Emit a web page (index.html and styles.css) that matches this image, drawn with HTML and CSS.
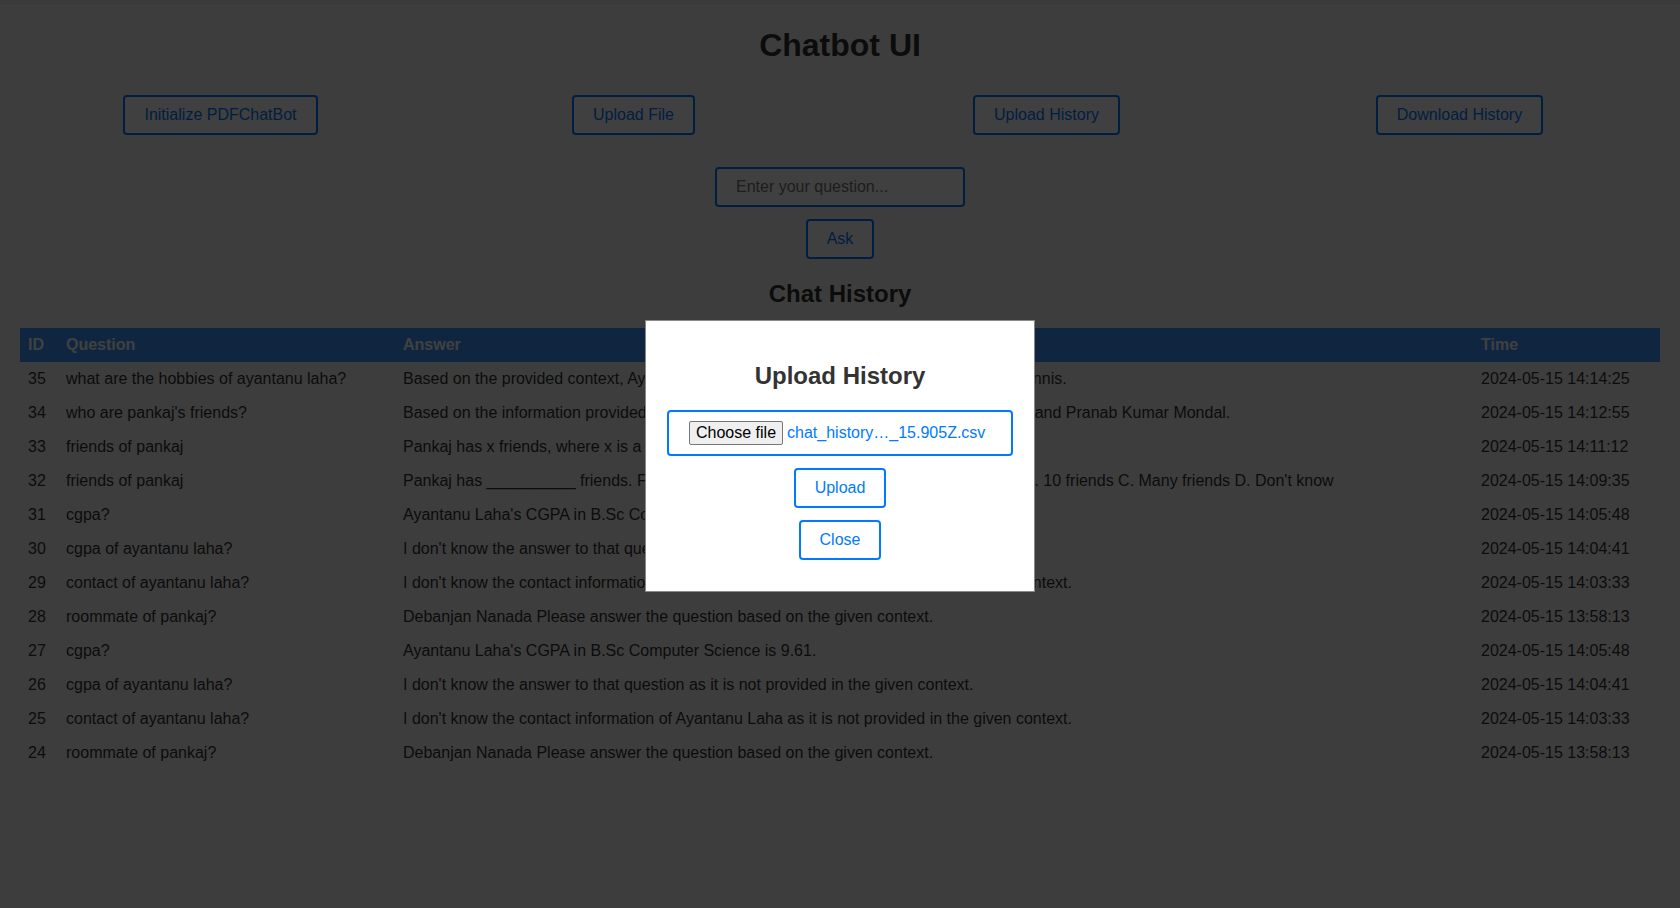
FILE: index.html
```html
<!DOCTYPE html>
<html lang="en">
<head>
<meta charset="utf-8">
<title>Chatbot UI</title>
<link rel="stylesheet" href="styles.css">
</head>
<body>
<div class="top-rule"></div>
<h1 class="title">Chatbot UI</h1>
<div class="actions">
  <div class="action-cell"><button class="btn">Initialize PDFChatBot</button></div>
  <div class="action-cell"><button class="btn">Upload File</button></div>
  <div class="action-cell"><button class="btn">Upload History</button></div>
  <div class="action-cell"><button class="btn">Download History</button></div>
</div>
<div class="ask-form">
  <input class="question-input" type="text" placeholder="Enter your question...">
  <button class="btn">Ask</button>
</div>
<h2 class="section-title">Chat History</h2>
<table class="history">
  <colgroup>
    <col class="col-id"><col class="col-q"><col class="col-a"><col class="col-t">
  </colgroup>
  <thead>
    <tr><th>ID</th><th>Question</th><th>Answer</th><th>Time</th></tr>
  </thead>
  <tbody>
    <tr><td>35</td><td>what are the hobbies of ayantanu laha?</td><td>Based on the provided context, Ayantanu Laha's hobbies are playing cricket, darts and tennis.</td><td>2024-05-15 14:14:25</td></tr>
    <tr><td>34</td><td>who are pankaj's friends?</td><td>Based on the information provided, Pankaj's friends are Ayantanu Laha, Debanjan Nandi and Pranab Kumar Mondal.</td><td>2024-05-15 14:12:55</td></tr>
    <tr><td>33</td><td>friends of pankaj</td><td>Pankaj has x friends, where x is a number not specified in the context.</td><td>2024-05-15 14:11:12</td></tr>
    <tr><td>32</td><td>friends of pankaj</td><td>Pankaj has __________ friends. Fill in the blank with the proper answer. A. Few friends B. 10 friends C. Many friends D. Don't know</td><td>2024-05-15 14:09:35</td></tr>
    <tr><td>31</td><td>cgpa?</td><td>Ayantanu Laha's CGPA in B.Sc Computer Science is 9.61.</td><td>2024-05-15 14:05:48</td></tr>
    <tr><td>30</td><td>cgpa of ayantanu laha?</td><td>I don't know the answer to that question as it is not provided in the given context.</td><td>2024-05-15 14:04:41</td></tr>
    <tr><td>29</td><td>contact of ayantanu laha?</td><td>I don't know the contact information of Ayantanu Laha as it is not provided in the given context.</td><td>2024-05-15 14:03:33</td></tr>
    <tr><td>28</td><td>roommate of pankaj?</td><td>Debanjan Nanada Please answer the question based on the given context.</td><td>2024-05-15 13:58:13</td></tr>
    <tr><td>27</td><td>cgpa?</td><td>Ayantanu Laha's CGPA in B.Sc Computer Science is 9.61.</td><td>2024-05-15 14:05:48</td></tr>
    <tr><td>26</td><td>cgpa of ayantanu laha?</td><td>I don't know the answer to that question as it is not provided in the given context.</td><td>2024-05-15 14:04:41</td></tr>
    <tr><td>25</td><td>contact of ayantanu laha?</td><td>I don't know the contact information of Ayantanu Laha as it is not provided in the given context.</td><td>2024-05-15 14:03:33</td></tr>
    <tr><td>24</td><td>roommate of pankaj?</td><td>Debanjan Nanada Please answer the question based on the given context.</td><td>2024-05-15 13:58:13</td></tr>
  </tbody>
</table>

<div class="overlay">
  <div class="modal">
    <h2 class="modal-title">Upload History</h2>
    <div class="file-field">
      <button class="file-button">Choose file</button>
      <span class="file-name">chat_history…_15.905Z.csv</span>
    </div>
    <button class="btn modal-btn">Upload</button>
    <button class="btn modal-btn modal-btn-last">Close</button>
  </div>
</div>
</body>
</html>
```

FILE: styles.css
```css
html, body {
  margin: 0;
  height: 100%;
}

body {
  padding: 0 20px;
  background: #f4f4f4;
  font-family: "Liberation Sans", Arial, sans-serif;
  font-size: 16px;
  color: #333;
}

.top-rule {
  height: 5px;
  margin: 0 -20px;
  background: #ececec;
  border-bottom: 1px solid #ffffff;
}

.title {
  margin: 21px 0 0;
  font-size: 32px;
  line-height: 37px;
  text-align: center;
  color: #333;
}

.actions {
  display: grid;
  grid-template-columns: repeat(4, 1fr);
  justify-items: center;
  margin: 31px -6px 0;
}

.btn {
  font-family: "Liberation Sans", Arial, sans-serif;
  font-size: 16px;
  line-height: 18px;
  padding: 9px 19px;
  border: 2px solid #007bff;
  border-radius: 4px;
  background: #ffffff;
  color: #007bff;
  cursor: pointer;
}

.ask-form {
  display: flex;
  flex-direction: column;
  align-items: center;
  gap: 12px;
  margin-top: 32px;
}

.question-input {
  box-sizing: border-box;
  width: 250px;
  height: 40px;
  padding: 0 19px;
  border: 2px solid #007bff;
  border-radius: 4px;
  font-family: "Liberation Sans", Arial, sans-serif;
  font-size: 16px;
  color: #333;
  background: #fff;
}

.question-input::placeholder {
  color: #757575;
}

.section-title {
  margin: 21px 0 20px;
  font-size: 24px;
  line-height: 28px;
  text-align: center;
  color: #333;
}

.history {
  width: 100%;
  border-collapse: collapse;
  table-layout: fixed;
}

.col-id { width: 38px; }
.col-q { width: 337px; }
.col-a { width: 1078px; }
.col-t { width: 187px; }

.history th,
.history td {
  padding: 8px;
  line-height: 18px;
  text-align: left;
  white-space: nowrap;
  overflow: hidden;
}

.history th {
  background: #3c94ff;
  color: #ffffff;
  font-weight: bold;
}

.history td {
  color: #333;
}

.overlay {
  position: fixed;
  inset: 0;
  background: rgba(0, 0, 0, 0.75);
  display: flex;
  justify-content: center;
  align-items: flex-start;
  padding-top: 320px;
  box-sizing: border-box;
}

.modal {
  width: 348px;
  padding: 21px 20px 21px;
  background: #ffffff;
  border: 1px solid #888;
  display: flex;
  flex-direction: column;
  align-items: center;
}

.modal-title {
  margin: 20px 0;
  font-size: 24px;
  line-height: 28px;
  color: #333;
  text-align: center;
}

.file-field {
  box-sizing: border-box;
  width: 346px;
  height: 46px;
  padding: 9px 20px;
  border: 2px solid #007bff;
  border-radius: 4px;
  display: flex;
  align-items: center;
  color: #007bff;
  margin-bottom: 12px;
}

.file-button {
  font-family: "Liberation Sans", Arial, sans-serif;
  font-size: 16px;
  line-height: 18px;
  padding: 2px 6px;
  margin-right: 4px;
  background: #efefef;
  border: 1px solid #767676;
  border-radius: 2px;
  color: #000;
}

.file-name {
  white-space: nowrap;
  line-height: 18px;
}

.modal-btn {
  margin-bottom: 12px;
}

.modal-btn-last {
  margin-bottom: 10px;
}
```
